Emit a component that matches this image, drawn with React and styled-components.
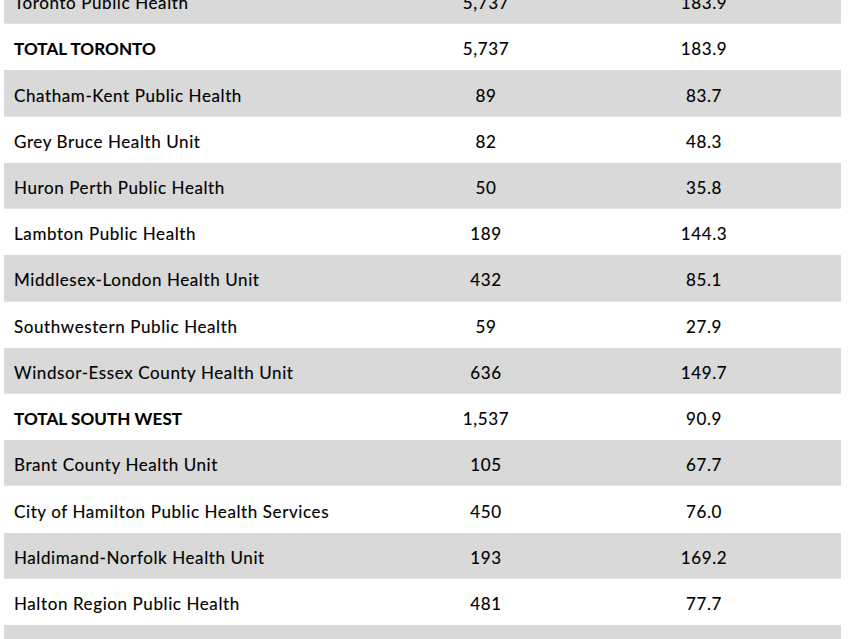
import React from 'react';
import styled, { createGlobalStyle } from 'styled-components';

const Global = createGlobalStyle`
  html, body {
    margin: 0;
    padding: 0;
    background: #ffffff;
    overflow: hidden;
  }
  body {
    font-family: 'Lato', 'Open Sans', 'Liberation Sans', sans-serif;
    color: #000;
  }
`;

const Page = styled.div`
  width: 859px;
  height: 639px;
  overflow: hidden;
  padding: 0 18px 0 4px;
  box-sizing: border-box;
`;

const Table = styled.div`
  margin-top: -22px;
  display: flex;
  flex-direction: column;
`;

const Row = styled.div`
  display: grid;
  grid-template-columns: 401px 162px 1fr;
  align-items: center;
  height: 46.23px;
  padding-top: 3px;
  box-sizing: border-box;
  background: ${({ shaded }) => (shaded ? '#d9d9d9' : '#ffffff')};
  box-shadow: inset 0 -1px 0 ${({ shaded }) => (shaded ? '#e4e4e4' : '#ffffff')};
  font-size: 17px;
  letter-spacing: 0.6px;
  -webkit-text-stroke: 0.15px #000;
`;

const Name = styled.div`
  padding-left: 10px;
  white-space: nowrap;
  font-weight: ${({ total }) => (total ? 700 : 400)};
  letter-spacing: ${({ total }) => (total ? '0.1px' : '0.6px')};
`;

const Num = styled.div`
  text-align: center;
`;

const rows = [
  ['Toronto Public Health', '5,737', '183.9'],
  ['TOTAL TORONTO', '5,737', '183.9', true],
  ['Chatham-Kent Public Health', '89', '83.7'],
  ['Grey Bruce Health Unit', '82', '48.3'],
  ['Huron Perth Public Health', '50', '35.8'],
  ['Lambton Public Health', '189', '144.3'],
  ['Middlesex-London Health Unit', '432', '85.1'],
  ['Southwestern Public Health', '59', '27.9'],
  ['Windsor-Essex County Health Unit', '636', '149.7'],
  ['TOTAL SOUTH WEST', '1,537', '90.9', true],
  ['Brant County Health Unit', '105', '67.7'],
  ['City of Hamilton Public Health Services', '450', '76.0'],
  ['Haldimand-Norfolk Health Unit', '193', '169.2'],
  ['Halton Region Public Health', '481', '77.7'],
  ['', '', ''],
];

const App = () => (
  <>
    <Global />
    <Page>
      <Table>
        {rows.map(([name, cases, rate, total], i) => (
          <Row key={i} shaded={i % 2 === 0}>
            <Name total={total}>{name}</Name>
            <Num>{cases}</Num>
            <Num>{rate}</Num>
          </Row>
        ))}
      </Table>
    </Page>
  </>
);

export default App;
